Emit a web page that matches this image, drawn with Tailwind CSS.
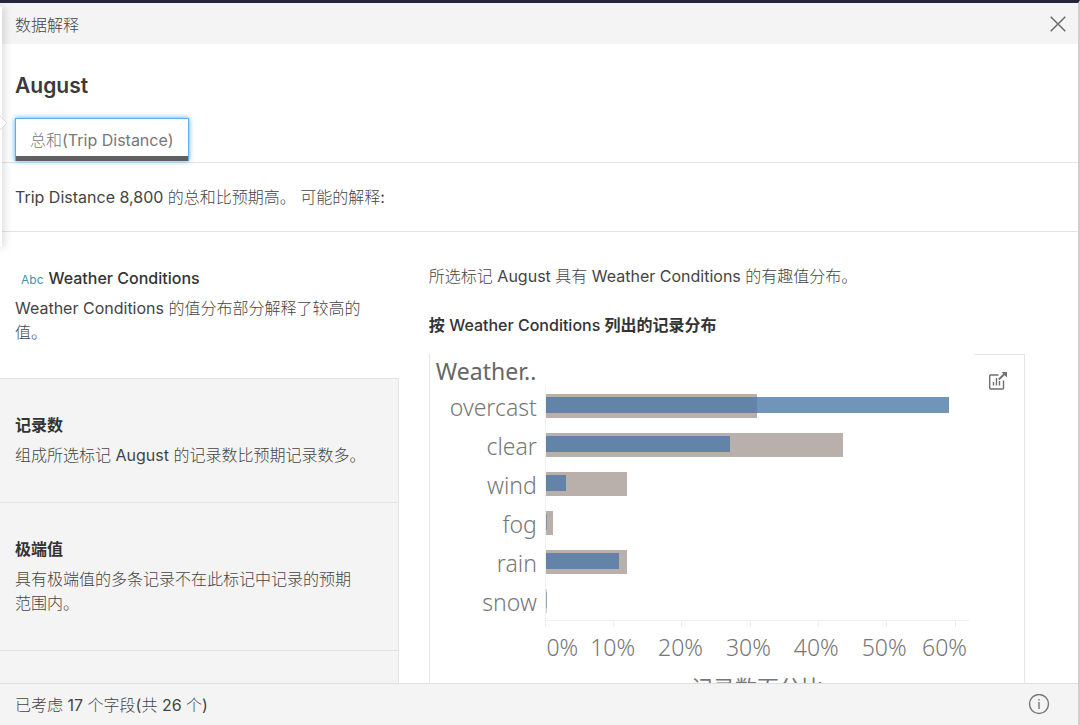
<!DOCTYPE html>
<html lang="zh-CN">
<head>
    <meta charset="UTF-8">
    <meta name="viewport" content="width=device-width, initial-scale=1.0">
    <title>数据解释</title>
    <script src="https://cdn.jsdelivr.net/npm/@tailwindcss/browser@4"></script>
</head>
<body class="bg-white text-base text-[#444] font-['Inter','Noto_Sans_CJK_SC_Light','Noto_Sans_CJK_SC',sans-serif]">
    <div class="relative h-screen flex flex-col overflow-hidden border-t-3 border-t-[#25263a] border-r-2 border-r-[#cfcfcf]">
        <!-- 左侧弹出层边缘 -->
        <div class="absolute left-0 top-1 w-[2px] h-60 bg-white shadow-[0_0_9px_rgba(0,0,0,0.5)]"></div>
        <svg class="absolute left-0 top-[112px] w-2 h-4" viewBox="0 0 8 16" fill="#fff" stroke="#d8dbe3"><path d="M0 1l7 7-7 7"/></svg>

        <!-- 标题栏 -->
        <header class="h-[41px] shrink-0 bg-[#f4f4f4] flex items-center justify-between pl-[15px] pr-3">
            <h1 class="pt-[3px]">数据解释</h1>
            <button type="button" aria-label="关闭">
                <svg class="w-4 h-4" viewBox="0 0 16 16" fill="none" stroke="#666" stroke-width="1.4"><path d="M.7.7l14.6 14.6M15.3.7L.7 15.3"/></svg>
            </button>
        </header>

        <!-- 所选标记和度量 -->
        <section class="shrink-0 border-b border-[#e3e3e3] px-[15px] pt-[26px]">
            <h2 class="text-[21px] leading-8 font-semibold text-[#3a3a3a]">August</h2>
            <button type="button" class="mt-4 mb-px h-[43px] px-[14px] text-[#777] bg-white border border-b-0 border-[#5fb0e8] shadow-[inset_0_-5px_0_#606060,0_0_5px_#4aa3e0]">总和(Trip Distance)</button>
        </section>

        <p class="shrink-0 h-[69px] px-[15px] flex items-center border-b border-[#e3e3e3]">Trip Distance 8,800 的总和比预期高。 可能的解释:</p>

        <main class="flex-1 min-h-0 flex overflow-hidden">
            <!-- 解释列表 -->
            <ul class="w-[37%] shrink-0 leading-6">
                <li class="px-[15px] pt-[34px] pb-[34px]">
                    <h3 class="font-medium text-[#333] pl-[6px]"><span class="text-xs font-normal text-[#4a8fae] mr-[5px]">Abc</span>Weather Conditions</h3>
                    <p class="mt-[6px] pr-4">Weather Conditions 的值分布部分解释了较高的值。</p>
                </li>
                <li class="px-[15px] pt-[34px] pb-[35px] bg-[#f4f4f4] border-y border-r border-[#e3e3e3]">
                    <h3 class="font-bold text-[#333] font-['Inter','Noto_Sans_CJK_SC',sans-serif]">记录数</h3>
                    <p class="mt-[6px]">组成所选标记 August 的记录数比预期记录数多。</p>
                </li>
                <li class="px-[15px] pt-[34px] pb-[35px] bg-[#f4f4f4] border-b border-r border-[#e3e3e3]">
                    <h3 class="font-bold text-[#333] font-['Inter','Noto_Sans_CJK_SC',sans-serif]">极端值</h3>
                    <p class="mt-[6px] pr-5">具有极端值的多条记录不在此标记中记录的预期范围内。</p>
                </li>
                <li class="h-[148px] bg-[#f4f4f4] border-r border-[#e3e3e3]"></li>
            </ul>

            <!-- 解释详情 -->
            <section class="flex-1 pl-[30px] pr-[53px] pt-8 leading-6">
                <p>所选标记 August 具有 Weather Conditions 的有趣值分布。</p>
                <h3 class="mt-[25px] font-medium text-[#333] font-['Inter','Noto_Sans_CJK_SC',sans-serif]"><b>按</b> Weather Conditions <b>列出的记录分布</b></h3>

                <div class="mt-[17px] h-[440px] flex border-x border-[#e6e6e6]">
                    <div class="flex-1 text-[23px] text-[#777] font-['Noto_Sans','Noto_Sans_CJK_SC',sans-serif]">
                        <h4 class="pl-[6px] h-8 leading-[34px] text-[#666]">Weather..</h4>
                        <div class="flex font-light">
                            <ul class="w-[115px] shrink-0 pr-2 pt-[2px] text-right leading-[39px]">
                                <li>overcast</li>
                                <li>clear</li>
                                <li>wind</li>
                                <li>fog</li>
                                <li>rain</li>
                                <li>snow</li>
                            </ul>
                            <div class="flex-1 pr-[5px]">
                                <div class="border-l border-b border-[#f0f0f0]">
                                    <div class="h-[39px] grid items-center">
                                        <div class="col-start-1 row-start-1 h-6 bg-[#b9afab]" style="width:50%"></div>
                                        <div class="col-start-1 row-start-1 h-4 mb-[2px] bg-[#4e79a7]/80" style="width:95.3%"></div>
                                    </div>
                                    <div class="h-[39px] grid items-center">
                                        <div class="col-start-1 row-start-1 h-6 bg-[#b9afab]" style="width:70.3%"></div>
                                        <div class="col-start-1 row-start-1 h-4 mb-[2px] bg-[#4e79a7]/80" style="width:43.5%"></div>
                                    </div>
                                    <div class="h-[39px] grid items-center">
                                        <div class="col-start-1 row-start-1 h-6 bg-[#b9afab]" style="width:19.1%"></div>
                                        <div class="col-start-1 row-start-1 h-4 mb-[2px] bg-[#4e79a7]/80" style="width:4.8%"></div>
                                    </div>
                                    <div class="h-[39px] grid items-center">
                                        <div class="col-start-1 row-start-1 h-6 bg-[#b9afab]" style="width:1.8%"></div>
                                        <div class="col-start-1 row-start-1 h-4 mb-[2px] bg-[#4e79a7]/50" style="width:0.3%"></div>
                                    </div>
                                    <div class="h-[39px] grid items-center">
                                        <div class="col-start-1 row-start-1 h-6 bg-[#b9afab]" style="width:19.1%"></div>
                                        <div class="col-start-1 row-start-1 h-4 mb-[2px] bg-[#4e79a7]/80" style="width:17.3%"></div>
                                    </div>
                                    <div class="h-[39px] grid items-center">
                                        <div class="col-start-1 row-start-1 h-6 bg-[#b9afab]/60" style="width:0.3%"></div>
                                        <div class="col-start-1 row-start-1 h-4 mb-[2px] bg-[#4e79a7]/50" style="width:0.3%"></div>
                                    </div>
                                </div>
                                <!-- 坐标轴刻度 -->
                                <div class="h-[6px] flex">
                                    <span class="w-[16.1%] border-l border-[#ececec]"></span>
                                    <span class="w-[16.1%] border-l border-[#ececec]"></span>
                                    <span class="w-[16.1%] border-l border-[#ececec]"></span>
                                    <span class="w-[16.1%] border-l border-[#ececec]"></span>
                                    <span class="w-[16.1%] border-l border-[#ececec]"></span>
                                    <span class="w-[16.1%] border-l border-[#ececec]"></span>
                                    <span class="border-l border-[#ececec]"></span>
                                </div>
                                <div class="flex text-center leading-10">
                                    <span class="w-[8%] pl-px">0%</span>
                                    <span class="w-[16%]">10%</span>
                                    <span class="w-[16%]">20%</span>
                                    <span class="w-[16%]">30%</span>
                                    <span class="w-[16%]">40%</span>
                                    <span class="w-[16%]">50%</span>
                                    <span class="flex-1 text-right pr-[2px]">60%</span>
                                </div>
                                <p class="mt-1 text-[22px] leading-8 text-center font-normal">记录数百分比</p>
                            </div>
                        </div>
                    </div>
                    <div class="w-[50px] border-t border-[#e6e6e6] pl-[14px] pt-4">
                        <button type="button" aria-label="打开工作表" class="block">
                            <svg class="w-5 h-5" viewBox="0 0 20 20" fill="none" stroke="#707070" stroke-width="1.4">
                                <path d="M10.5 4H2.7Q1.700 4 1.700 5V17Q1.700 18 2.700 18H14.500Q15.500 18 15.500 17V9.500"/>
                                <path d="M5.500 14.500V11M8.500 14.500V7M11.500 14.500V10"/>
                                <path d="M10.800 8.500L16.500 3" stroke-width="1.800"/>
                                <path d="M13.500 1H19V6.500z" fill="#707070" stroke="none"/>
                            </svg>
                        </button>
                    </div>
                </div>
            </section>
        </main>

        <!-- 底部状态 -->
        <footer class="relative h-[42px] shrink-0 bg-[#f4f4f4] border-t border-[#e0e0e0] flex items-center justify-between pl-[15px] pr-[28px]">
            <span>已考虑 17 个字段(共 26 个)</span>
            <button type="button" aria-label="信息">
                <svg class="w-[22px] h-[22px]" viewBox="0 0 22 22" fill="none" stroke="#777" stroke-width="1.4"><circle cx="11" cy="10" r="9.500"/><path d="M11 8v7M11 5v1.600"/></svg>
            </button>
        </footer>
    </div>
</body>
</html>
